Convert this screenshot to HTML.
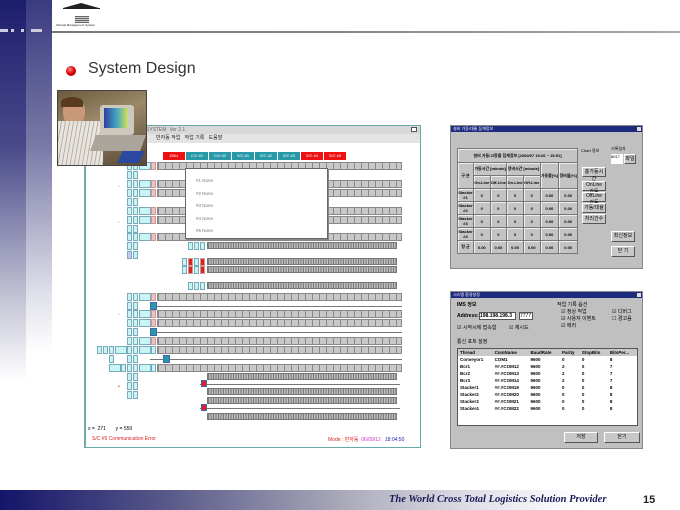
<!DOCTYPE html>
<html><head><meta charset="utf-8"><style>
*{margin:0;padding:0;box-sizing:border-box}
body{width:680px;height:510px;position:relative;overflow:hidden;background:#fff;font-family:"Liberation Sans","Noto Sans CJK KR",sans-serif}
.a{position:absolute}
.big{position:absolute;left:157px;width:245px;height:8px;background:repeating-linear-gradient(90deg,#888 0 1px,#c8c8c8 1px 7px);border:1px solid #888}
.fine{position:absolute;left:207px;width:190px;height:7px;background:repeating-linear-gradient(90deg,#777 0 1px,#bdbdbd 1px 2.5px);border:1px solid #777}
.ln{position:absolute;left:150px;width:252px;height:1px;background:#777}
.c{position:absolute;width:5px;height:8px;background:#c8f4f4;border:1px solid #7ab}
.w{position:absolute;width:12px;height:8px;background:#c8f4f4;border:1px solid #7ab}
.p{position:absolute;width:5px;height:8px;background:#f2c0c0;border:1px solid #c99}
.tab{position:absolute;top:152px;width:22px;height:8px;font-size:4px;color:#fff;text-align:center;line-height:8px}
.dlg{position:absolute;background:#c0c0c0;border:1px solid #888}
.tb{position:absolute;left:0;right:0;top:0;height:6px;background:#1c2a80;font-size:4px;color:#fff;padding-left:2px;line-height:6px}
.btn{position:absolute;background:#c8c8c8;border:1px solid;border-color:#fff #555 #555 #fff;font-size:5px;text-align:center}
table{border-collapse:collapse}
.t1 td{border:1px solid #777;background:#c4c4c4;font-size:4px;text-align:center;height:13px;box-shadow:inset 1px 1px #eee;font-weight:bold}
.t2 td{font-size:4.5px;height:7px;padding-left:2px;font-weight:bold}
</style></head><body>
<div class="a" style="left:0;top:0;width:26px;height:490px;background:linear-gradient(#1d1d6e,#4a4a8a 30%,#c8c8d8 62%,#fff 78%)"></div>
<div class="a" style="left:26px;top:0;width:26px;height:490px;background:linear-gradient(#3a3a80,#7a7aa8 30%,#e0e0ea 60%,#fff 72%)"></div>
<div class="a" style="left:0;top:29px;width:8px;height:3px;background:#ccd"></div>
<div class="a" style="left:11px;top:29px;width:3px;height:3px;background:#ccd"></div>
<div class="a" style="left:21px;top:29px;width:3px;height:3px;background:#ccd"></div>
<div class="a" style="left:31px;top:29px;width:11px;height:3px;background:#ccd"></div>
<div class="a" style="left:52px;top:31px;width:628px;height:2px;background:linear-gradient(90deg,#777,#888,#aaa)"></div>
<div class="a" style="left:63px;top:3px;width:0;height:0;border-left:18px solid transparent;border-right:18px solid transparent;border-bottom:5px solid #222"></div>
<div class="a" style="left:63px;top:8px;width:37px;height:1px;background:#222"></div>
<div class="a" style="left:75px;top:16px;width:14px;height:7px;background:repeating-linear-gradient(#666 0 1px,#ccc 1px 2px)"></div>
<div class="a" style="left:56px;top:23px;font-size:3px;color:#222;white-space:nowrap">Varietal Management System</div>
<div class="a" style="left:66px;top:66px;width:10px;height:10px;border-radius:50%;background:radial-gradient(circle at 40% 35%,#f88,#d00 50%,#800)"></div>
<div class="a" style="left:88px;top:60px;font-size:16px;color:#333">System Design</div>
<div class="a" style="left:84px;top:125px;width:337px;height:323px;border:1px solid #6aa;border-left:2px solid #7aa;background:#fff"></div>
<div class="a" style="left:86px;top:126px;width:334px;height:8px;background:#d8d8d8;font-size:5px;color:#666;padding-left:60px;line-height:8px">SYSTEM &nbsp;Ver 2.1</div>
<div class="a" style="left:411px;top:127px;width:6px;height:5px;border:1px solid #555;background:#fff"></div>
<div class="a" style="left:86px;top:134px;width:334px;height:9px;background:#e4e4e4;font-size:5px;color:#222;padding-left:70px;line-height:9px">반자동 작업 &nbsp;&nbsp;작업 기록 &nbsp;&nbsp;도움말</div>
<div class="tab" style="left:163px;background:#e11">DNU</div>
<div class="tab" style="left:186px;background:#2899a8">C/V #1</div>
<div class="tab" style="left:209px;background:#2899a8">C/V #2</div>
<div class="tab" style="left:232px;background:#2899a8">S/C #1</div>
<div class="tab" style="left:255px;background:#2899a8">S/C #2</div>
<div class="tab" style="left:278px;background:#2899a8">S/C #3</div>
<div class="tab" style="left:301px;background:#e11">S/C #4</div>
<div class="tab" style="left:324px;background:#e11">S/C #5</div>
<div class="big" style="top:162px"></div><div class="big" style="top:180px"></div><div class="big" style="top:189px"></div>
<div class="big" style="top:207px"></div><div class="big" style="top:216px"></div><div class="big" style="top:233px"></div>
<div class="fine" style="top:242px"></div><div class="fine" style="top:258px"></div><div class="fine" style="top:266px"></div><div class="fine" style="top:282px"></div>
<div class="big" style="top:293px"></div><div class="ln" style="top:306px"></div>
<div class="big" style="top:310px"></div><div class="big" style="top:319px"></div><div class="ln" style="top:332px"></div>
<div class="big" style="top:337px"></div><div class="big" style="top:346px"></div><div class="ln" style="top:359px"></div>
<div class="big" style="top:364px"></div>
<div class="fine" style="top:373px"></div><div class="ln" style="top:384px;left:200px;width:200px"></div>
<div class="fine" style="top:388px"></div><div class="fine" style="top:397px"></div><div class="ln" style="top:408px;left:200px;width:200px"></div><div class="fine" style="top:413px"></div>
<div class="c" style="left:127px;top:162px"></div><div class="c" style="left:133px;top:162px"></div><div class="w" style="left:139px;top:162px"></div><div class="p" style="left:151px;top:162px"></div>
<div class="c" style="left:127px;top:171px"></div><div class="c" style="left:133px;top:171px"></div>
<div class="c" style="left:127px;top:180px"></div><div class="c" style="left:133px;top:180px"></div><div class="w" style="left:139px;top:180px"></div><div class="p" style="left:151px;top:180px"></div>
<div class="c" style="left:127px;top:189px"></div><div class="c" style="left:133px;top:189px"></div><div class="w" style="left:139px;top:189px"></div><div class="p" style="left:151px;top:189px"></div>
<div class="c" style="left:127px;top:198px"></div><div class="c" style="left:133px;top:198px"></div>
<div class="c" style="left:127px;top:207px"></div><div class="c" style="left:133px;top:207px"></div><div class="w" style="left:139px;top:207px"></div><div class="p" style="left:151px;top:207px"></div>
<div class="c" style="left:127px;top:216px"></div><div class="c" style="left:133px;top:216px"></div><div class="w" style="left:139px;top:216px"></div><div class="p" style="left:151px;top:216px"></div>
<div class="c" style="left:127px;top:225px"></div><div class="c" style="left:133px;top:225px"></div>
<div class="c" style="left:127px;top:233px"></div><div class="c" style="left:133px;top:233px"></div><div class="w" style="left:139px;top:233px"></div><div class="p" style="left:151px;top:233px"></div>
<div class="c" style="left:127px;top:242px"></div><div class="c" style="left:133px;top:242px"></div>
<div class="c" style="left:127px;top:251px;background:#c8c8f4"></div><div class="c" style="left:133px;top:251px"></div>
<div class="c" style="left:188px;top:242px"></div><div class="c" style="left:194px;top:242px"></div><div class="c" style="left:200px;top:242px"></div>
<div class="c" style="left:182px;top:258px"></div><div class="p" style="left:188px;top:258px;background:#d22"></div><div class="c" style="left:194px;top:258px"></div><div class="p" style="left:200px;top:258px;background:#d22"></div>
<div class="c" style="left:182px;top:266px"></div><div class="p" style="left:188px;top:266px;background:#d22"></div><div class="c" style="left:194px;top:266px"></div><div class="p" style="left:200px;top:266px;background:#d22"></div>
<div class="c" style="left:188px;top:282px"></div><div class="c" style="left:194px;top:282px"></div><div class="c" style="left:200px;top:282px"></div>
<div class="c" style="left:127px;top:293px"></div><div class="c" style="left:133px;top:293px"></div><div class="w" style="left:139px;top:293px"></div><div class="p" style="left:151px;top:293px"></div>
<div class="c" style="left:127px;top:302px"></div><div class="c" style="left:133px;top:302px"></div>
<div class="c" style="left:127px;top:310px"></div><div class="c" style="left:133px;top:310px"></div><div class="w" style="left:139px;top:310px"></div><div class="p" style="left:151px;top:310px"></div>
<div class="c" style="left:127px;top:319px"></div><div class="c" style="left:133px;top:319px"></div><div class="w" style="left:139px;top:319px"></div><div class="p" style="left:151px;top:319px"></div>
<div class="c" style="left:127px;top:328px"></div><div class="c" style="left:133px;top:328px"></div>
<div class="c" style="left:127px;top:337px"></div><div class="c" style="left:133px;top:337px"></div><div class="w" style="left:139px;top:337px"></div><div class="p" style="left:151px;top:337px"></div>
<div class="c" style="left:97px;top:346px"></div><div class="c" style="left:103px;top:346px"></div><div class="c" style="left:109px;top:346px"></div><div class="w" style="left:115px;top:346px"></div><div class="c" style="left:127px;top:346px"></div><div class="c" style="left:133px;top:346px"></div><div class="w" style="left:139px;top:346px"></div><div class="c" style="left:151px;top:346px"></div>
<div class="c" style="left:109px;top:355px"></div><div class="c" style="left:127px;top:355px"></div><div class="c" style="left:133px;top:355px"></div>
<div class="w" style="left:109px;top:364px"></div><div class="c" style="left:121px;top:364px"></div><div class="c" style="left:127px;top:364px"></div><div class="c" style="left:133px;top:364px"></div><div class="w" style="left:139px;top:364px"></div><div class="c" style="left:151px;top:364px"></div>
<div class="c" style="left:127px;top:373px"></div><div class="c" style="left:133px;top:373px"></div><div class="c" style="left:127px;top:382px"></div><div class="c" style="left:133px;top:382px"></div><div class="c" style="left:127px;top:391px"></div><div class="c" style="left:133px;top:391px"></div>
<div class="a" style="left:150px;top:302px;width:7px;height:8px;background:#2899a8;border:1px solid #46a"></div>
<div class="a" style="left:150px;top:328px;width:7px;height:8px;background:#2899a8;border:1px solid #46a"></div>
<div class="a" style="left:163px;top:355px;width:7px;height:8px;background:#2899a8;border:1px solid #46a"></div>
<div class="a" style="left:201px;top:380px;width:6px;height:7px;background:#d22;border:1px solid #46a"></div>
<div class="a" style="left:201px;top:404px;width:6px;height:7px;background:#d22;border:1px solid #46a"></div>
<div class="a" style="left:185px;top:168px;width:143px;height:71px;background:#fff;border:1px solid #666;box-shadow:1px 1px #888;font-size:4.5px;color:#777;padding:6px 0 0 10px;line-height:12.6px">#1 None<br>#2 None<br>#3 None<br>#4 None<br>#5 None</div>
<div class="a" style="left:118px;top:184px;font-size:5px;color:#777">▫</div>
<div class="a" style="left:118px;top:220px;font-size:5px;color:#777">▫</div>
<div class="a" style="left:118px;top:312px;font-size:5px;color:#777">▫</div>
<div class="a" style="left:118px;top:384px;font-size:5px;color:#d22">•</div>
<div class="a" style="left:88px;top:426px;font-size:5px;color:#000">x = &nbsp;271 &nbsp;&nbsp;&nbsp;&nbsp;&nbsp;&nbsp;y = 559</div>
<div class="a" style="left:92px;top:436px;font-size:5px;color:#d22">S/C #5 Communication Error</div>
<div class="a" style="left:328px;top:436px;font-size:5px;color:#d22;white-space:nowrap">Mode : 반자동 &nbsp;<span style="color:#c3c">06/09/12</span> &nbsp;&nbsp;<span style="color:#22a">18:04:50</span></div>
<div class="a" style="left:57px;top:90px;width:90px;height:76px;background:linear-gradient(160deg,#6c5a40,#9a8868 40%,#5a4a36);border:1px solid #444;overflow:hidden">
 <div class="a" style="left:5px;top:8px;width:22px;height:26px;border-radius:45%;background:#c89878"></div>
 <div class="a" style="left:3px;top:6px;width:22px;height:10px;border-radius:50% 50% 0 0;background:#5a3a20"></div>
 <div class="a" style="left:0;top:30px;width:45px;height:46px;background:repeating-linear-gradient(100deg,#e8e4de 0 3px,#b8b0a8 3px 4px)"></div>
 <div class="a" style="left:42px;top:14px;width:34px;height:30px;background:#ccc8bc;border-radius:3px"></div>
 <div class="a" style="left:46px;top:17px;width:24px;height:20px;background:linear-gradient(90deg,#3040a0,#40a0c0,#d0e060)"></div>
 <div class="a" style="left:35px;top:44px;width:50px;height:16px;background:#aaa49a;transform:skewX(-20deg)"></div>
 <div class="a" style="left:62px;top:60px;width:22px;height:12px;background:#2a48a0;transform:skewX(-25deg)"></div>
</div>
<div class="dlg" style="left:450px;top:125px;width:193px;height:144px">
 <div class="tb">설비 가동/대율 집계정보</div>
 <div class="a" style="right:1px;top:1px;width:4px;height:4px;background:#ddd"></div>
 <table class="t1 a" style="left:6px;top:22px;width:121px">
  <tr><td colspan="7" style="height:14px">설비 가동/고장률 집계정보 [2000/07 15:26 ~ 15:51]</td></tr>
  <tr><td rowspan="2" style="width:16px">구 분</td><td colspan="2">가동시간 [minute]</td><td colspan="2">정비시간 [minute]</td><td rowspan="2">가동률[%]</td><td rowspan="2">정비율[%]</td></tr>
  <tr><td>On-Line</td><td>Off-Line</td><td>On-Line</td><td>Off-Line</td></tr>
  <tr><td>Stacker #1</td><td>0</td><td>0</td><td>0</td><td>0</td><td>0.00</td><td>0.00</td></tr>
  <tr><td>Stacker #2</td><td>0</td><td>0</td><td>0</td><td>0</td><td>0.00</td><td>0.00</td></tr>
  <tr><td>Stacker #3</td><td>0</td><td>0</td><td>0</td><td>0</td><td>0.00</td><td>0.00</td></tr>
  <tr><td>Stacker #4</td><td>0</td><td>0</td><td>0</td><td>0</td><td>0.00</td><td>0.00</td></tr>
  <tr><td>평 균</td><td>0.00</td><td>0.00</td><td>0.00</td><td>0.00</td><td>0.00</td><td>0.00</td></tr>
 </table>
 <div class="a" style="left:130px;top:22px;font-size:4px">Chart 정보</div>
 <div class="btn" style="left:131px;top:41px;width:24px;height:10px">총가동시간</div>
 <div class="btn" style="left:131px;top:55px;width:24px;height:10px">OnLine 가동</div>
 <div class="btn" style="left:131px;top:66px;width:24px;height:10px">OffLine 가동</div>
 <div class="btn" style="left:131px;top:77px;width:24px;height:10px">가동/대율</div>
 <div class="btn" style="left:131px;top:88px;width:24px;height:10px">처리건수</div>
 <div class="a" style="left:160px;top:20px;font-size:4px">기록일자</div>
 <div class="a" style="left:160px;top:28px;width:12px;height:10px;background:#fff;font-size:4px">8017</div>
 <div class="btn" style="left:173px;top:28px;width:12px;height:10px">파일</div>
 <div class="btn" style="left:160px;top:105px;width:24px;height:11px">최신정보</div>
 <div class="btn" style="left:160px;top:120px;width:24px;height:11px">닫 기</div>
</div>
<div class="dlg" style="left:450px;top:291px;width:193px;height:158px">
 <div class="tb">시스템 환경설정</div>
 <div class="a" style="right:1px;top:1px;width:4px;height:4px;background:#ddd"></div>
 <div class="a" style="left:6px;top:9px;font-size:5px;font-weight:bold">IMS 정보</div>
 <div class="a" style="left:6px;top:21px;font-size:5px;font-weight:bold">Address:</div>
 <div class="a" style="left:28px;top:20px;width:37px;height:8px;background:#fff;border:1px solid #555;font-size:5px;font-weight:bold">198.198.198.3</div>
 <div class="a" style="left:68px;top:20px;width:14px;height:8px;background:#fff;border:1px solid #555;font-size:5px">7777</div>
 <div class="a" style="left:6px;top:32px;font-size:5px">☑ 시작시에 접속함 &nbsp;&nbsp;&nbsp;&nbsp;&nbsp;&nbsp;&nbsp;&nbsp;☑ 재시도</div>
 <div class="a" style="left:106px;top:9px;font-size:5px">작업 기록 옵션</div>
 <div class="a" style="left:110px;top:17px;font-size:5px;line-height:7px">☑ 정상 작업<br>☑ 사용자 이벤트<br>☑ 에러</div>
 <div class="a" style="left:161px;top:17px;font-size:5px;line-height:7px">☑ 디버그<br>☐ 경고음</div>
 <div class="a" style="left:6px;top:46px;font-size:5px">통신 포트 설정</div>
 <div class="a" style="left:6px;top:56px;width:181px;height:78px;background:#fff;border:1px solid #555">
  <table class="t2" style="width:100%">
   <tr style="background:#c8c8c8"><td>Thread</td><td>ComName</td><td>BaudRate</td><td>Parity</td><td>StopBits</td><td>BitsPer...</td></tr>
   <tr><td>Conveyor1</td><td>COM1</td><td>9600</td><td>0</td><td>0</td><td>8</td></tr>
   <tr><td>Bcr1</td><td>##.#COM12</td><td>9600</td><td>2</td><td>0</td><td>7</td></tr>
   <tr><td>Bcr2</td><td>##.#COM13</td><td>9600</td><td>2</td><td>0</td><td>7</td></tr>
   <tr><td>Bcr3</td><td>##.#COM14</td><td>9600</td><td>2</td><td>0</td><td>7</td></tr>
   <tr><td>Stacker1</td><td>##.#COM19</td><td>9600</td><td>0</td><td>0</td><td>8</td></tr>
   <tr><td>Stacker2</td><td>##.#COM20</td><td>9600</td><td>0</td><td>0</td><td>8</td></tr>
   <tr><td>Stacker3</td><td>##.#COM21</td><td>9600</td><td>0</td><td>0</td><td>8</td></tr>
   <tr><td>Stacker4</td><td>##.#COM22</td><td>9600</td><td>0</td><td>0</td><td>8</td></tr>
  </table>
 </div>
 <div class="btn" style="left:113px;top:140px;width:34px;height:11px">저장</div>
 <div class="btn" style="left:153px;top:140px;width:36px;height:11px">닫기</div>
</div>
<div class="a" style="left:0;top:490px;width:680px;height:20px;background:linear-gradient(90deg,#14146a,#5a5a8a 25%,#a8a8b8 50%,#e0e0e8 70%,#fff 85%)"></div>
<div class="a" style="left:389px;top:494px;font-family:'Liberation Serif',serif;font-style:italic;font-weight:bold;font-size:10.5px;color:#1a1a5a">The World Cross Total Logistics Solution Provider</div>
<div class="a" style="left:643px;top:494px;font-size:11px;font-weight:bold;color:#222">15</div>
</body></html>
